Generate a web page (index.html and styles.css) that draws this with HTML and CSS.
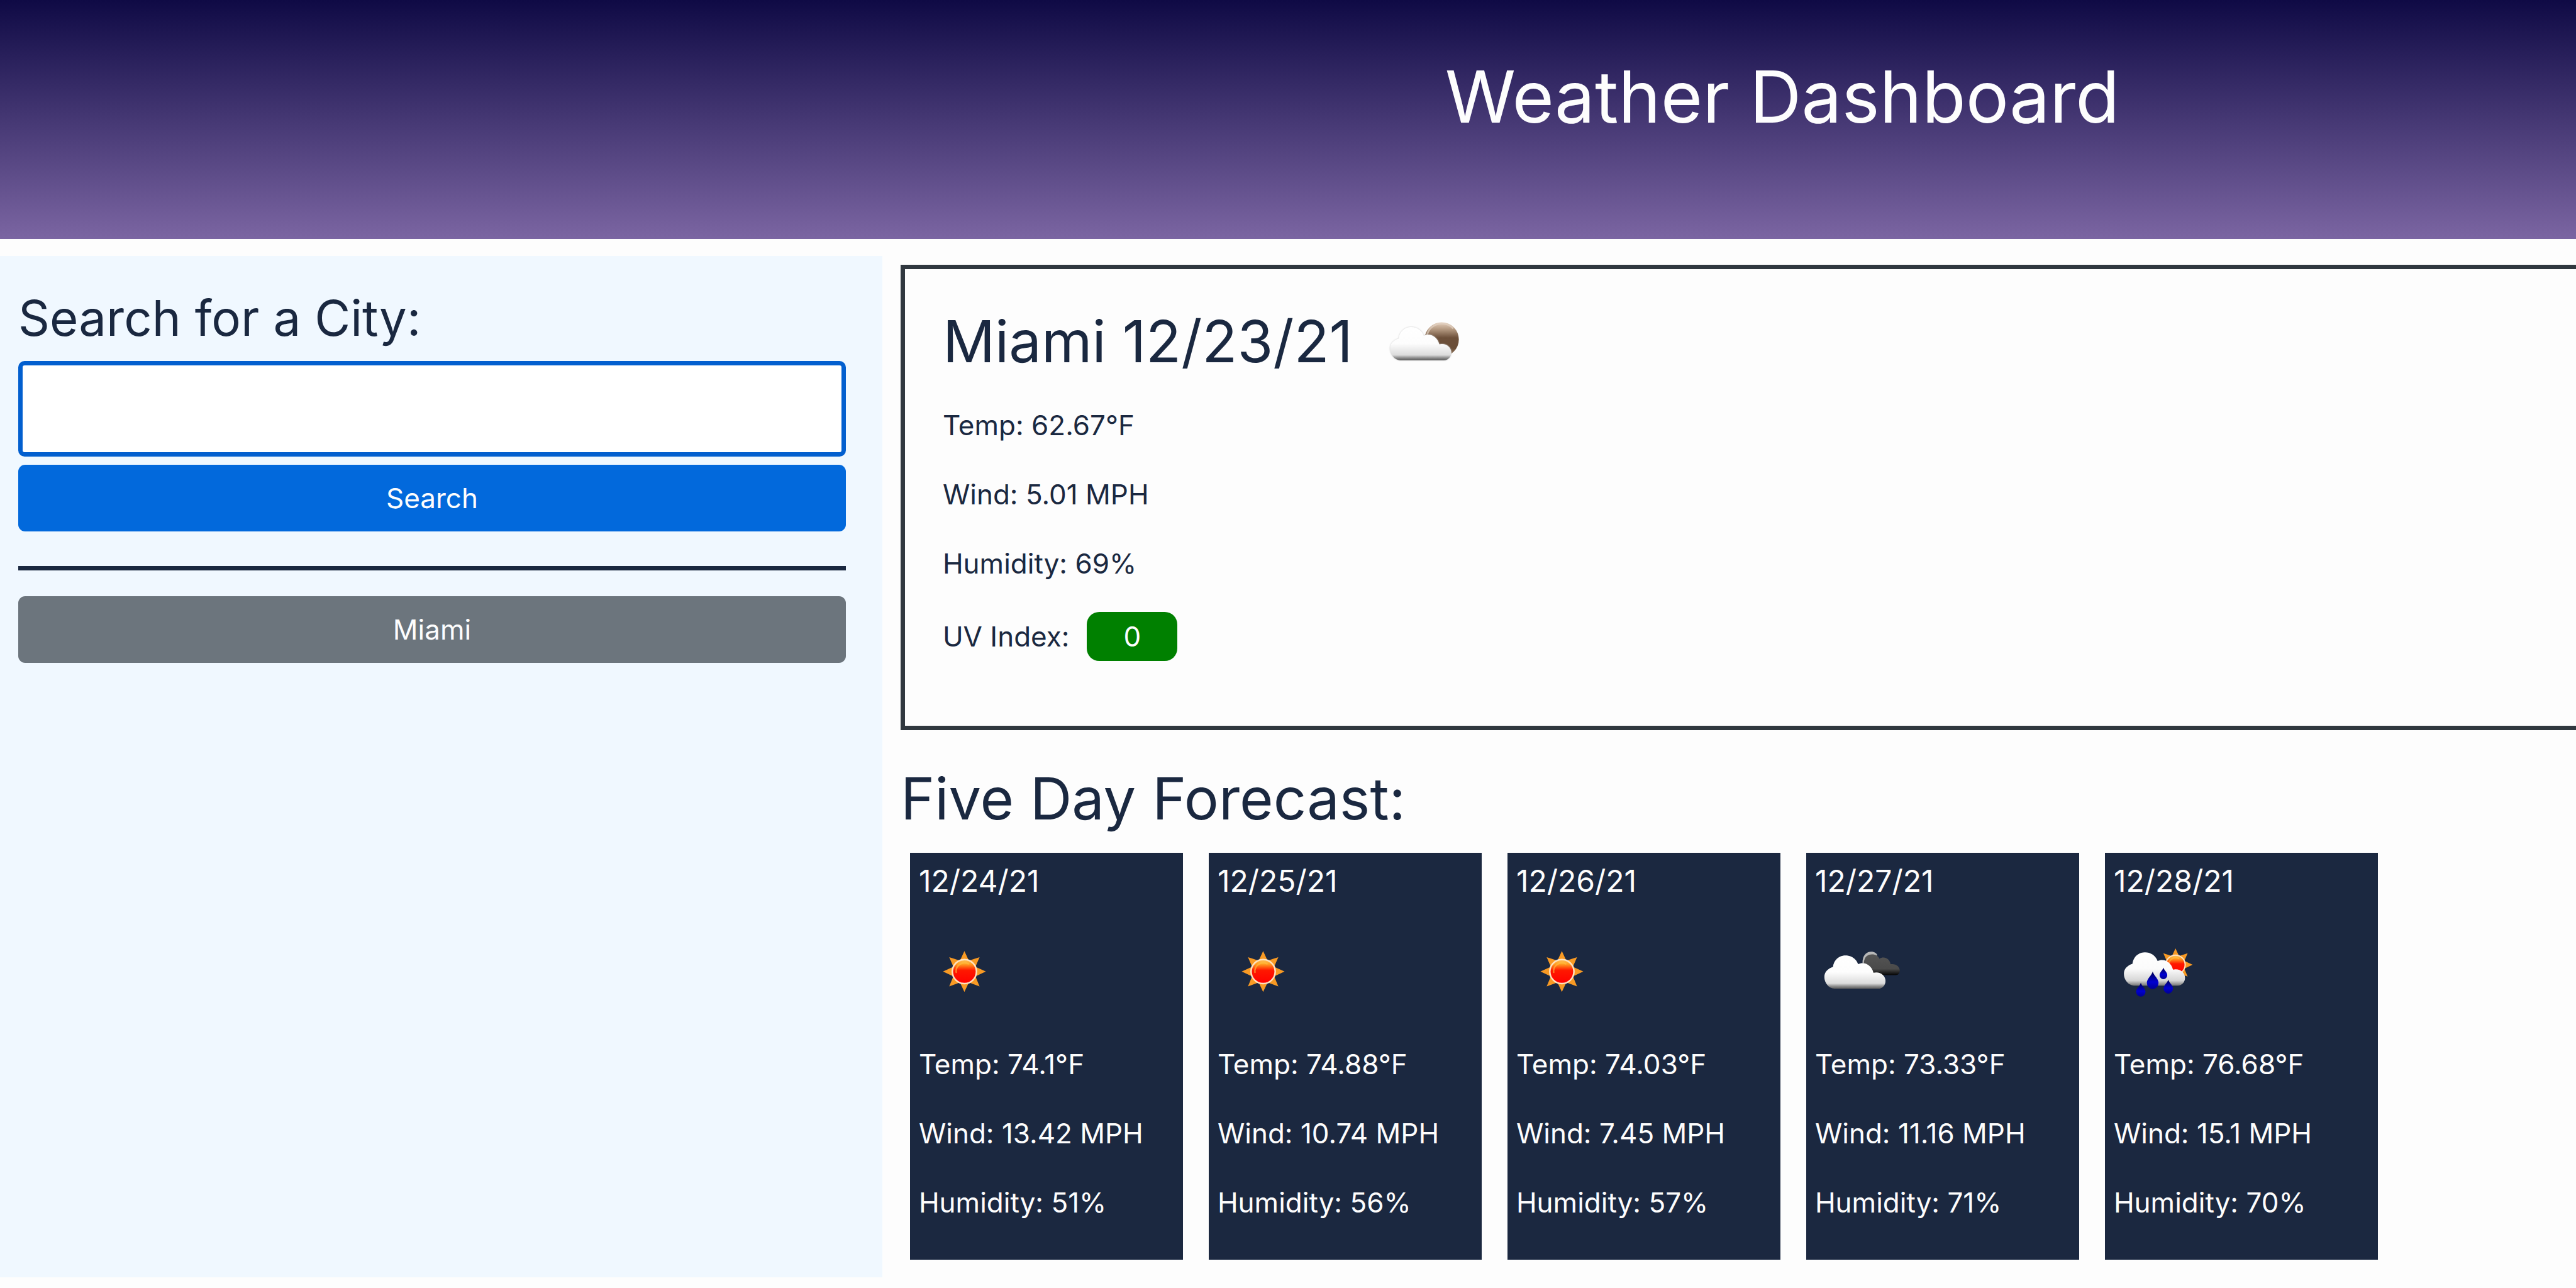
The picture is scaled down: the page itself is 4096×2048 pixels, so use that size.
FILE: index.html
```
<!DOCTYPE html>
<html lang="en">
<head>
<meta charset="utf-8">
<title>Weather Dashboard</title>
<link rel="stylesheet" href="styles.css">
</head>
<body>
<svg class="defs" aria-hidden="true">
  <defs>
    <linearGradient id="cloud-fill" x1="0" y1="0" x2="0" y2="1">
      <stop offset="0" stop-color="#ffffff"/>
      <stop offset=".5" stop-color="#fdfdfd"/>
      <stop offset=".84" stop-color="#dcdcdc"/>
      <stop offset=".93" stop-color="#8c8c8c"/>
      <stop offset="1" stop-color="#5c5c5c"/>
    </linearGradient>
    <linearGradient id="rain-cloud-fill" x1="0" y1="0" x2="0" y2="1">
      <stop offset="0" stop-color="#ffffff"/>
      <stop offset=".5" stop-color="#fbfbfb"/>
      <stop offset=".85" stop-color="#d6d6d6"/>
      <stop offset="1" stop-color="#777777"/>
    </linearGradient>
    <linearGradient id="dark-fill" x1="0" y1="0" x2="0" y2="1">
      <stop offset="0" stop-color="#555555"/>
      <stop offset=".7" stop-color="#4a4a4a"/>
      <stop offset="1" stop-color="#050505"/>
    </linearGradient>
    <linearGradient id="sun-fill" x1="0" y1="0" x2="0" y2="1">
      <stop offset="0" stop-color="#ffc860"/>
      <stop offset=".2" stop-color="#ff9a20"/>
      <stop offset=".45" stop-color="#ff1800"/>
      <stop offset="1" stop-color="#ff0000"/>
    </linearGradient>
    <linearGradient id="moon-fill" x1="0" y1="0" x2="0" y2="1">
      <stop offset="0" stop-color="#e6d0bc"/>
      <stop offset=".2" stop-color="#b59a82"/>
      <stop offset=".45" stop-color="#6d503a"/>
      <stop offset=".75" stop-color="#6a4e38"/>
      <stop offset="1" stop-color="#a08468"/>
    </linearGradient>
    <linearGradient id="drop-fill" x1="0" y1="0" x2="0" y2="1">
      <stop offset="0" stop-color="#000050"/>
      <stop offset=".6" stop-color="#0000d0"/>
      <stop offset="1" stop-color="#000090"/>
    </linearGradient>
    <g id="sun">
      <path fill="#f89a24" d="M0-105 L22-58 L-22-58ZM0 105 L22 58 L-22 58ZM-110 0 L-62-22 L-62 22ZM110 0 L62-22 L62 22ZM-78-74 L-28-58 L-58-28ZM78-74 L28-58 L58-28ZM-78 76 L-28 58 L-58 28ZM78 76 L28 58 L58 28Z"/>
      <circle r="62" fill="url(#sun-fill)" stroke="#ffe2c0" stroke-width="8"/>
      <path d="M-42 4A43 43 0 0 1 20-40" fill="none" stroke="#ffc040" stroke-width="8" stroke-linecap="round" opacity=".6"/>
    </g>
    <path id="cloud" d="M195 280C166 278 144 250 144 220C144 192 164 176 188 168C192 132 220 109 252 109C284 109 308 128 317 154C350 138 388 160 396 198C430 190 458 212 458 240C458 262 442 280 420 280Z"/>
    <path id="drop" d="M0-46C5-25 30-10 30 12A30 32 0 0 1-30 12C-30-10-5-25 0-46Z"/>
    <symbol id="icon-sun" viewBox="-19 -40 465 465"><use href="#sun" x="215" y="192"/></symbol>
    <symbol id="icon-clouds" viewBox="96 -40 465 465">
      <path fill="#b8b8b8" d="M340 150C338 112 358 90 384 90C402 90 412 98 416 108L380 150Z"/>
      <path fill="url(#dark-fill)" d="M347 150C347 120 364 104 388 104C408 104 420 112 427 126C448 112 478 122 484 154C510 150 530 166 531 184C532 200 524 210 510 210H400Z"/>
      <use href="#cloud" fill="url(#cloud-fill)"/>
    </symbol>
    <symbol id="icon-moon-cloud" viewBox="60 -38 465 465">
      <circle cx="381" cy="184" r="88" fill="url(#moon-fill)"/>
      <path d="M306 164A76 70 0 0 1 440 128" fill="none" stroke="#e4d4c6" stroke-width="9" opacity=".65"/>
      <use class="cloud-shade" href="#cloud" x="-28" y="11" fill="url(#cloud-fill)"/>
    </symbol>
    <symbol id="icon-rain" viewBox="43 -10 465 465">
      <g transform="translate(360 187) scale(.8)"><use href="#sun"/></g>
      <use href="#cloud" x="-49" y="14" fill="url(#rain-cloud-fill)"/>
      <g fill="url(#drop-fill)">
        <use href="#drop" x="243" y="268"/>
        <g transform="translate(298 232) scale(.66)"><use href="#drop"/></g>
        <g transform="translate(182 316) scale(.8)"><use href="#drop"/></g>
        <g transform="translate(323 300) scale(.8)"><use href="#drop"/></g>
      </g>
    </symbol>
  </defs>
</svg>
<header class="banner">
  <h1 class="banner-title">Weather Dashboard</h1>
</header>
<div class="layout">
  <aside class="sidebar">
    <form class="search" onsubmit="return false">
      <label class="search-label" for="city">Search for a City:</label>
      <input class="search-input" id="city" type="text">
      <button class="btn btn-primary" type="submit">Search</button>
    </form>
    <hr class="divider">
    <button class="btn btn-secondary" type="button">Miami</button>
  </aside>
  <main class="content">
    <section class="today">
      <div class="today-heading">
        <h2 class="section-title">Miami 12/23/21</h2>
        <svg class="icon" role="img" aria-label="Few clouds"><use href="#icon-moon-cloud"/></svg>
      </div>
      <div class="readings">
        <p class="reading">Temp: 62.67°F</p>
        <p class="reading">Wind: 5.01 MPH</p>
        <p class="reading">Humidity: 69%</p>
        <p class="reading reading-uv">UV Index: <span class="uv">0</span></p>
      </div>
    </section>
    <h2 class="section-title forecast-title">Five Day Forecast:</h2>
    <section class="forecast">
      <article class="card">
        <h3 class="card-date">12/24/21</h3>
        <svg class="icon" role="img" aria-label="Clear"><use href="#icon-sun"/></svg>
        <div class="readings"><p class="reading">Temp: 74.1°F</p><p class="reading">Wind: 13.42 MPH</p><p class="reading">Humidity: 51%</p></div>
      </article>
      <article class="card">
        <h3 class="card-date">12/25/21</h3>
        <svg class="icon" role="img" aria-label="Clear"><use href="#icon-sun"/></svg>
        <div class="readings"><p class="reading">Temp: 74.88°F</p><p class="reading">Wind: 10.74 MPH</p><p class="reading">Humidity: 56%</p></div>
      </article>
      <article class="card">
        <h3 class="card-date">12/26/21</h3>
        <svg class="icon" role="img" aria-label="Clear"><use href="#icon-sun"/></svg>
        <div class="readings"><p class="reading">Temp: 74.03°F</p><p class="reading">Wind: 7.45 MPH</p><p class="reading">Humidity: 57%</p></div>
      </article>
      <article class="card">
        <h3 class="card-date">12/27/21</h3>
        <svg class="icon" role="img" aria-label="Broken clouds"><use href="#icon-clouds"/></svg>
        <div class="readings"><p class="reading">Temp: 73.33°F</p><p class="reading">Wind: 11.16 MPH</p><p class="reading">Humidity: 71%</p></div>
      </article>
      <article class="card">
        <h3 class="card-date">12/28/21</h3>
        <svg class="icon" role="img" aria-label="Rain"><use href="#icon-rain"/></svg>
        <div class="readings"><p class="reading">Temp: 76.68°F</p><p class="reading">Wind: 15.1 MPH</p><p class="reading">Humidity: 70%</p></div>
      </article>
    </section>
  </main>
</div>
</body>
</html>
```
FILE: styles.css
```
* { box-sizing: border-box; }
body {
  margin: 0;
  background: #fdfdfd;
  color: #1a2840;
  font-family: Inter, "Open Sans", sans-serif;
  font-size: 44px;
  line-height: 66px;
}
h1, h2, h3, p { margin: 0; font-weight: 400; }
.defs { display: block; width: 0; height: 0; }
.banner {
  padding: 88px 0 160px 56.1%;
  background: linear-gradient(#0f0a45, #7b65a2);
  color: #fdfdfd;
}
.banner-title { font-size: 114px; line-height: 132px; }
.layout {
  display: grid;
  grid-template-columns: 34.25% 1fr;
  margin-top: 27px;
}
.sidebar { padding: 51px 58px 51px 29px; background: #f0f8ff; }
.search { display: flex; flex-direction: column; }
.search-label { margin-bottom: 20px; font-size: 78px; line-height: 96px; }
.search-input {
  width: 100%;
  height: 152px;
  margin-bottom: 13px;
  padding: 0 28px;
  border: 7px solid #025fcf;
  border-radius: 10px;
  background: #fff;
  color: inherit;
  font: inherit;
  outline: none;
}
.btn {
  width: 100%;
  padding: 20px;
  border: 0;
  border-radius: 11px;
  color: #fdfdfd;
  font: inherit;
}
.btn-primary { background: #0269dc; }
.btn-secondary { background: #6c757d; }
.divider { height: 7px; margin: 55px 0 41px; border: 0; background: #1a2840; }
.content { padding: 14px 0 28px 29px; }
.today {
  padding: 43px 60px 103px;
  border: 7px solid #30383f;
  border-right: 0;
}
.today-heading { display: flex; align-items: center; gap: 42px; margin-bottom: 28px; }
.section-title { font-size: 92px; line-height: 106px; }
.icon { display: block; width: 144px; height: 144px; }
.cloud-shade { filter: drop-shadow(0 0 3px #c8c8c8); }
.readings { display: flex; flex-direction: column; gap: 44px; }
.reading { line-height: 66px; }
.reading-uv { display: flex; align-items: center; gap: 28px; }
.uv {
  padding: 6px 58px;
  border-radius: 20px;
  background: #008000;
  color: #fdfdfd;
}
.forecast-title { margin: 56px 0 33px; }
.forecast {
  display: grid;
  grid-template-columns: repeat(5, 434px);
  gap: 41px;
  padding-left: 15px;
}
.card { padding: 12px 14px 58px; background: #1b2840; color: #fdfdfd; }
.card-date { font-size: 48px; line-height: 66px; }
.card .icon { margin: 39px 0 42px; }
```
